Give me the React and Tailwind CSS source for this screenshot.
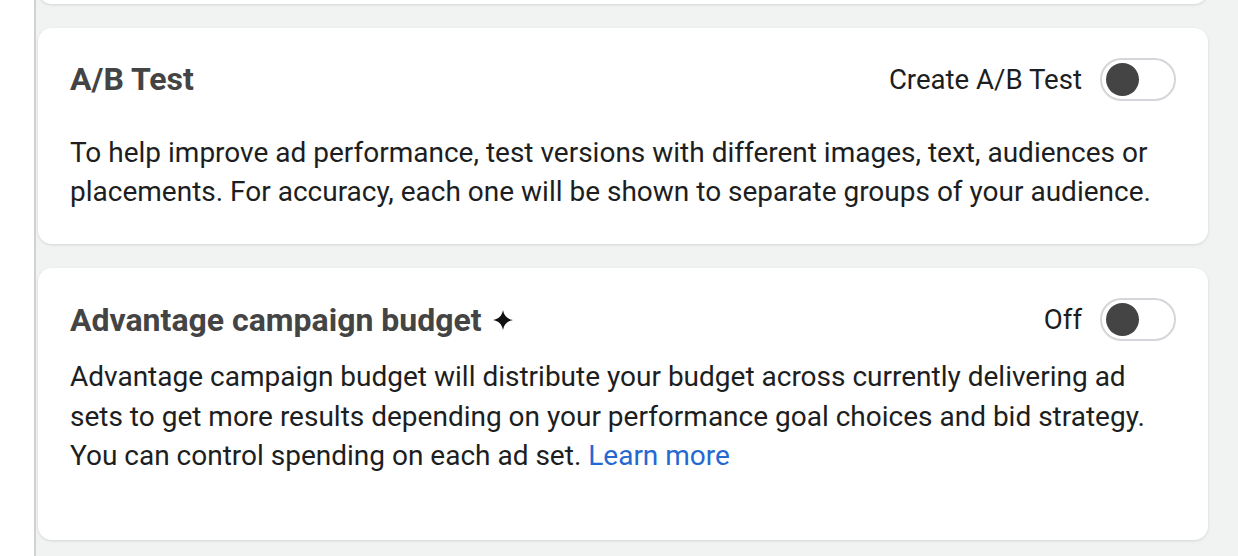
function Sparkle() {
  return (
    <svg viewBox="0 0 20 20" className="w-[20px] h-[20px]" fill="#111">
      <path d="M10 0 C10.9 5.6 14.4 9.1 20 10 C14.4 10.9 10.9 14.4 10 20 C9.1 14.4 5.6 10.9 0 10 C5.6 9.1 9.1 5.6 10 0 Z" />
    </svg>
  )
}

function Toggle() {
  return (
    <div className="w-[76px] h-[43px] rounded-full border-2 border-[#d4d6d9] bg-white flex items-center px-[4px]">
      <div className="w-[33px] h-[33px] rounded-full bg-[#444444]" />
    </div>
  )
}

export default function App() {
  return (
    <div className="flex h-[556px] w-[1238px] overflow-hidden bg-white font-['Roboto',sans-serif]">
      <div className="w-[36px] shrink-0 border-r-2 border-[#cfd1d3] bg-white" />
      <div className="flex-1 bg-[#f1f2f2] pl-[2px] pr-[30px] flex flex-col gap-[24px] mt-[-40px]">
        {/* previous card, mostly scrolled off */}
        <div className="h-[44px] shrink-0 rounded-[14px] bg-white shadow-[0_1px_3px_rgba(0,0,0,0.12)]" />

        {/* A/B test */}
        <div className="shrink-0 rounded-[14px] bg-white shadow-[0_1px_3px_rgba(0,0,0,0.12)] px-[32px] pt-[30px] pb-[33px]">
          <div className="flex items-center justify-between h-[43px]">
            <h2 className="text-[32px] font-bold text-[#444444] -mt-[2px]">A/B Test</h2>
            <div className="flex items-center gap-[18px]">
              <span className="text-[27.6px] text-[#1c1e21]">Create A/B Test</span>
              <Toggle />
            </div>
          </div>
          <p className="mt-[32px] text-[28px] leading-[39px] text-[#1c1e21]">
            To help improve ad performance, test versions with different images, text, audiences or placements. For accuracy, each one will be shown to separate groups of your audience.
          </p>
        </div>

        {/* Advantage campaign budget */}
        <div className="shrink-0 rounded-[14px] bg-white shadow-[0_1px_3px_rgba(0,0,0,0.12)] px-[32px] pt-[30px] pb-[64px]">
          <div className="flex items-center justify-between h-[43px]">
            <div className="flex items-center gap-[11px]">
              <h2 className="text-[32px] font-bold text-[#444444]">Advantage campaign budget</h2>
              <Sparkle />
            </div>
            <div className="flex items-center gap-[18px]">
              <span className="text-[27.6px] text-[#1c1e21]">Off</span>
              <Toggle />
            </div>
          </div>
          <p className="mt-[16px] pr-[20px] text-[28px] leading-[39.5px] text-[#1c1e21]">
            Advantage campaign budget will distribute your budget across currently delivering ad sets to get more results depending on your performance goal choices and bid strategy. You can control spending on each ad set.{' '}
            <a className="text-[#2668d2]">Learn more</a>
          </p>
        </div>
      </div>
    </div>
  )
}
